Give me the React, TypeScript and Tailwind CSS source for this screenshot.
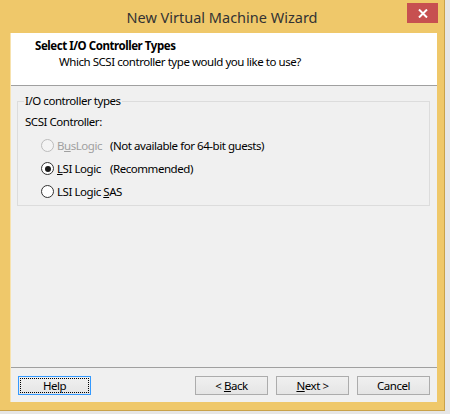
const ui = { fontFamily: '"Noto Sans", "Liberation Sans", sans-serif' };

function Radio({ checked, disabled }: { checked?: boolean; disabled?: boolean }) {
  return (
    <span
      className={`flex h-[13px] w-[13px] shrink-0 items-center justify-center rounded-full border ${
        disabled ? 'border-[#bcbcbc] bg-[#f4f4f4]' : 'border-[#333333] bg-white'
      }`}
    >
      {checked && <span className="h-[6px] w-[6px] rounded-full bg-[#1a1a1a]" />}
    </span>
  );
}

function Option({
  label,
  note,
  checked,
  disabled,
}: {
  label: React.ReactNode;
  note?: string;
  checked?: boolean;
  disabled?: boolean;
}) {
  return (
    <div className="flex h-[23px] items-center">
      <Radio checked={checked} disabled={disabled} />
      <span className={`ml-[3px] w-[53px] whitespace-nowrap ${disabled ? 'text-[#a0a0a0]' : 'text-black'}`}>
        {label}
      </span>
      {note && <span className="whitespace-nowrap text-black">{note}</span>}
    </div>
  );
}

function Button({ children, focused }: { children: React.ReactNode; focused?: boolean }) {
  return (
    <button
      className={`flex h-[19px] w-[73px] items-center justify-center border bg-gradient-to-b from-[#f0f0f0] to-[#e5e5e5] p-[1px] text-black ${
        focused ? 'border-[#3399ff]' : 'border-[#acacac]'
      }`}
    >
      <span
        className={`flex h-full w-full items-center justify-center whitespace-pre ${
          focused ? 'border border-dotted border-black' : ''
        }`}
      >
        {children}
      </span>
    </button>
  );
}

export default function App() {
  return (
    <div
      className="h-[414px] w-[450px] overflow-hidden bg-[#e6e6e6] text-[11.5px] leading-[16px] tracking-[-0.45px]"
      style={ui}
    >
      <div className="flex h-[411px] w-[445px] flex-col border-r border-b border-[#c9a24a] bg-[#efc86a]">
        {/* title bar */}
        <div className="relative flex h-[33px] shrink-0 items-center justify-center">
          <span className="text-[14.5px] tracking-normal text-[#333333]">New Virtual Machine Wizard</span>
          <div className="absolute right-[6px] top-[3px] flex h-[20px] w-[31px] items-center justify-center bg-[#c75050]">
            <svg width="10" height="9" viewBox="0 0 10 9">
              <path d="M1 0.5 L9 8.5 M9 0.5 L1 8.5" stroke="white" strokeWidth="2" />
            </svg>
          </div>
        </div>

        <div className="ml-[10px] mr-[7px] flex flex-1 flex-col border-l border-[#f7e2ae] bg-[#f0f0f0]">
          {/* header */}
          <div className="h-[53px] shrink-0 border-b border-[#a0a0a0] bg-white pt-[5px]">
            <div className="pl-[24px] font-bold text-black">Select I/O Controller Types</div>
            <div className="pl-[48px] text-black">Which SCSI controller type would you like to use?</div>
          </div>

          {/* body */}
          <div className="flex-1 px-[6px] pt-[7px]">
            <fieldset className="h-[113px] w-[413px] border border-[#dcdcdc] px-[7px]">
              <legend className="ml-[-1px] px-[1px] text-black">I/O controller types</legend>
              <div className="mt-[5px] text-black">SCSI Controller:</div>
              <div className="mt-[4px] pl-[16px]">
                <Option
                  disabled
                  label={
                    <>
                      B<span className="underline">u</span>sLogic
                    </>
                  }
                  note="(Not available for 64-bit guests)"
                />
                <Option
                  checked
                  label={
                    <>
                      <span className="underline">L</span>SI Logic
                    </>
                  }
                  note="(Recommended)"
                />
                <Option
                  label={
                    <>
                      LSI Logic <span className="underline">S</span>AS
                    </>
                  }
                />
              </div>
            </fieldset>
          </div>

          {/* footer */}
          <div className="h-[35px] shrink-0 border-t border-[#a0a0a0] pt-[8px]">
            <div className="flex items-center justify-between px-[7px]">
              <Button focused>Help</Button>
              <div className="flex gap-[8px]">
                <Button>
                  {'< '}
                  <span className="underline">B</span>ack
                </Button>
                <Button>
                  <span className="underline">N</span>
                  {'ext >'}
                </Button>
                <Button>Cancel</Button>
              </div>
            </div>
          </div>
        </div>
        <div className="h-[8px] shrink-0" />
      </div>
    </div>
  );
}
